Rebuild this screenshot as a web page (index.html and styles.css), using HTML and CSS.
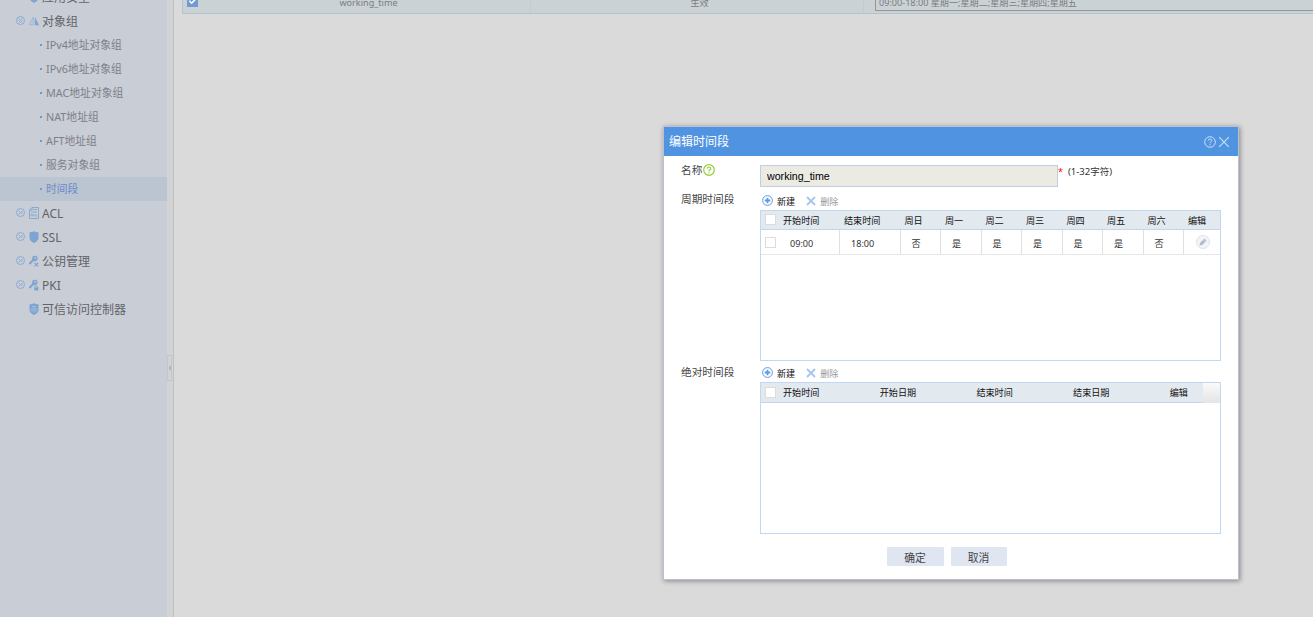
FILE: index.html
```
<!DOCTYPE html>
<html lang="zh-CN">
<head>
    <meta charset="utf-8">
    <link rel="stylesheet" href="styles.css">
    <title>编辑时间段</title>
</head>
<body>
    <svg class="sprite">
        <symbol id="i-more" viewBox="0 0 9 9"><circle cx="4.5" cy="4.5" r="4" /><path d="M2.7 2.8 4.3 4.5 2.7 6.2M4.8 2.8 6.4 4.5 4.8 6.2" /></symbol>
        <symbol id="i-shield" viewBox="0 0 10 12"><path d="M0.5 1.3Q3 1.5 5 .2 7 1.5 9.5 1.3V7Q9.3 10 5 12 .7 10 .5 7Z" /></symbol>
        <symbol id="i-key" viewBox="0 0 11 12"><path fill-rule="evenodd" d="M7 0a3.4 3.4 0 1 1-1.5 6.4L2 10.5H0V8.6L4 4.8A3.4 3.4 0 0 1 7 0ZM7.6 1.7a1 1 0 1 0 .1 0Z" /></symbol>
        <symbol id="i-add" viewBox="0 0 11 11"><circle cx="5.5" cy="5.5" r="4.9" /><path d="M5.5 2.7V8.3M2.7 5.5H8.3" stroke-width="1.8" /></symbol>
        <symbol id="i-del" viewBox="0 0 10 10"><path d="M1 1 9 9M9 1 1 9" /></symbol>
        <symbol id="i-help" viewBox="0 0 12 12"><circle cx="6" cy="6" r="5.3" /><path d="M4.2 4.6Q4.3 3 6 3T7.8 4.5Q7.8 5.3 6.8 5.9 6 6.3 6 7.3M6 8.2V9.4" /></symbol>
    </svg>

    <div class="page">
        <ul class="menu">
            <li class="menu-item"><span class="toggle"></span><svg class="icon fill"><use href="#i-shield" /></svg>应用安全</li>
            <li class="menu-item">
                <svg class="toggle" viewBox="0 0 9 9"><circle cx="4.5" cy="4.5" r="4" /><path d="M2.7 2.5 4.5 4 6.3 2.5M2.7 4.7 4.5 6.4 6.3 4.7" /></svg>
                <svg class="icon" viewBox="0 0 12 12"><path d="M5 1.5V10.5H.5Z" fill="none" stroke="#8fb2d8" /><path d="M7 1 12 11H7Z" fill="#7da4d2" /></svg>对象组
            </li>
            <li class="menu-sub">IPv4地址对象组</li>
            <li class="menu-sub">IPv6地址对象组</li>
            <li class="menu-sub">MAC地址对象组</li>
            <li class="menu-sub">NAT地址组</li>
            <li class="menu-sub">AFT地址组</li>
            <li class="menu-sub">服务对象组</li>
            <li class="menu-sub active">时间段</li>
            <li class="menu-item">
                <svg class="toggle"><use href="#i-more" /></svg>
                <svg class="icon" viewBox="0 0 10 12" fill="none" stroke="#85aad4"><path d="M3 .5H9.5V11.5H.5V3ZM.5 3H3V.5M4 2.5H8M2 5H8" /><path d="M2 9.3V7.4H3.4V9.3M5.6 7.4H4.7V9.1H5.6M6.8 7V9.1H8.4" stroke-width=".8" /></svg>ACL
            </li>
            <li class="menu-item"><svg class="toggle"><use href="#i-more" /></svg><svg class="icon fill"><use href="#i-shield" /></svg>SSL</li>
            <li class="menu-item">
                <svg class="toggle"><use href="#i-more" /></svg>
                <svg class="icon fill" viewBox="0 0 11 12"><use href="#i-key" width="10" height="11" /><path d="M6 8 10 12M10 8 6 12" stroke="#7da4d2" stroke-width="1.3" /></svg>公钥管理
            </li>
            <li class="menu-item">
                <svg class="toggle"><use href="#i-more" /></svg>
                <svg class="icon fill" viewBox="0 0 11 12"><use href="#i-key" width="10" height="11" /><path d="M6.3 9V8Q8 6 9.7 8V9" fill="none" stroke="#7da4d2" /><path d="M5.7 8.8H10.3V12H5.7Z" /></svg>PKI
            </li>
            <li class="menu-item"><span class="toggle"></span><svg class="icon fill" viewBox="0 0 10 12"><use href="#i-shield" /><path d="M3 3.5H7M3 5V8.5M5 3.5V9.5M7 5V8.5" stroke="#b2c5de" stroke-width=".8" /></svg>可信访问控制器</li>
        </ul>
        <div class="splitter"><span class="handle"></span></div>
        <div class="main">
            <div class="list-row">
                <div class="list-check"><svg viewBox="0 0 11 11"><path d="M2.3 4.8 4.7 7.2 8.8 2.8" /></svg></div>
                <div class="list-name">working_time</div>
                <div class="list-state">生效</div>
                <div class="list-time"><div class="time-box">09:00-18:00 星期一;星期二;星期三;星期四;星期五</div></div>
            </div>
        </div>
    </div>

    <div class="dialog">
        <div class="dialog-title">
            <span>编辑时间段</span>
            <svg class="title-help"><use href="#i-help" /></svg>
            <svg class="title-close"><use href="#i-del" /></svg>
        </div>
        <form class="form">
            <div class="field name-field">
                <label class="label">名称<svg class="label-help"><use href="#i-help" /></svg></label>
                <input class="input-text" type="text" value="working_time" disabled>
                <span class="required">*</span>
                <span class="hint">(1-32字符)</span>
            </div>

            <div class="field">
                <label class="label">周期时间段</label>
                <div class="grid-wrap">
                    <div class="toolbar">
                        <svg class="add"><use href="#i-add" /></svg><span>新建</span>
                        <svg class="del"><use href="#i-del" /></svg><span class="off">删除</span>
                    </div>
                    <div class="grid period">
                        <div class="row head">
                            <i class="check"></i><span>开始时间</span><span>结束时间</span><span>周日</span><span>周一</span><span>周二</span><span>周三</span><span>周四</span><span>周五</span><span>周六</span><span>编辑</span>
                        </div>
                        <div class="row data">
                            <i class="check"></i><span>09:00</span><span>18:00</span><span>否</span><span>是</span><span>是</span><span>是</span><span>是</span><span>是</span><span>否</span>
                            <svg class="edit" viewBox="0 0 14 14"><circle cx="7" cy="7" r="6.5" fill="#f3f4f9" stroke="#dfe2ec" /><path d="M3.5 10.5 4 8 8.5 3.6 10.6 5.7 6.1 10.1Z" fill="#b3b9ca" /><path d="M7.4 4.6 9.5 6.7" stroke="#e9ebf3" stroke-width=".7" /></svg>
                        </div>
                    </div>
                </div>
            </div>

            <div class="field">
                <label class="label second">绝对时间段</label>
                <div class="grid-wrap">
                    <div class="toolbar">
                        <svg class="add"><use href="#i-add" /></svg><span>新建</span>
                        <svg class="del"><use href="#i-del" /></svg><span class="off">删除</span>
                    </div>
                    <div class="grid absolute">
                        <div class="row head">
                            <i class="check"></i><span>开始时间</span><span>开始日期</span><span>结束时间</span><span>结束日期</span><span>编辑</span><b class="filler"></b>
                        </div>
                    </div>
                </div>
            </div>

            <div class="buttons">
                <button class="btn" type="button">确定</button>
                <button class="btn" type="button">取消</button>
            </div>
        </form>
    </div>
</body>
</html>
```
FILE: styles.css
```
* {
    box-sizing: border-box;
}

body {
    margin: 0;
    height: 617px;
    overflow: hidden;
    font-family: "Noto Sans", "Noto Sans CJK SC", sans-serif;
    font-size: 9.1px;
    color: #333;
    background: #dadada;
}

svg {
    flex: none;
}

.sprite {
    display: none;
}

.page {
    display: flex;
    height: 617px;
}

/* left menu */
.menu {
    width: 167px;
    margin: 0;
    padding: 0;
    list-style: none;
    background: #c9cdd6;
}

.menu-item {
    display: flex;
    align-items: center;
    height: 24px;
    padding-left: 16px;
    font-size: 12px;
    color: #626469;
}

.menu-item:first-child {
    margin-top: -15px;
}

.toggle {
    width: 9px;
    height: 9px;
    margin: 0 4px 2px 0;
    fill: none;
    stroke: #85a6cf;
    stroke-width: 0.9;
}

.icon {
    width: 10px;
    height: 12px;
    margin-right: 3px;
}

.fill {
    fill: #7da4d2;
}

.menu-sub {
    display: flex;
    align-items: center;
    height: 24px;
    padding: 0 0 2px 40px;
    font-size: 10.8px;
    color: #7d8087;
}

.menu-sub::before {
    content: "";
    width: 2px;
    height: 2px;
    margin: 2px 4px 0 0;
    background: #7299c4;
}

.active {
    background: #bac5d1;
    color: #6f89cb;
}

.splitter {
    display: flex;
    align-items: center;
    width: 7px;
    padding-top: 119px;
    background: #d2d3d5;
    border-right: 1px solid #bfc0c2;
}

.handle {
    width: 5px;
    height: 26px;
    border: 1px solid #c4c5c8;
    background: linear-gradient(#b4b5b8, #b4b5b8) center / 2px 4px no-repeat;
}

/* list behind the dialog */
.main {
    flex: 1;
    padding-left: 8px;
}

.list-row {
    display: grid;
    grid-template-columns: 19px 329px 333px 1fr;
    height: 14px;
    background: #cad2d5;
    border: solid #b3c4ce;
    border-width: 0 0 1px 1px;
    line-height: 5px;
    text-align: center;
    color: #7b7d7e;
}

.list-check svg {
    display: block;
    width: 11px;
    height: 11px;
    margin: -4px 0 0 4px;
    background: #6f9bd2;
    fill: none;
    stroke: #fff;
    stroke-width: 1.6;
}

.list-name,
.list-state {
    padding-left: 5px;
    border-right: 1px solid #c4cccf;
}

.list-time {
    padding-left: 11px;
    text-align: left;
}

.time-box {
    height: 11px;
    padding-left: 3px;
    border: solid #929697;
    border-width: 0 0 1px 1px;
    white-space: nowrap;
}

/* dialog */
.dialog {
    position: absolute;
    left: 663px;
    top: 126px;
    width: 576px;
    height: 454px;
    background: #fff;
    border: 1px solid #b9c2d0;
    box-shadow: 1px 1px 5px rgba(0, 0, 0, 0.4);
}

.dialog-title {
    display: flex;
    align-items: center;
    height: 29px;
    padding: 0 8px 2px 5px;
    background: #5093e1;
    color: #fff;
    font-size: 12px;
}

.title-help,
.title-close {
    fill: none;
    stroke: #c6dcf6;
    stroke-width: 1;
}

.title-help {
    width: 12px;
    height: 12px;
    margin: 3px 2px 0 auto;
}

.title-close {
    width: 12px;
    height: 12px;
    margin-top: 3px;
}

.form {
    padding: 9px 17px 0;
}

.field {
    display: flex;
    align-items: flex-start;
}

.label {
    display: flex;
    width: 79px;
    font-size: 10.67px;
    line-height: 16px;
    color: #444;
    margin-top: -2px;
}

.second {
    margin-top: -1px;
}

.label-help {
    width: 12px;
    height: 12px;
    margin: 2px 0 0 1px;
    fill: none;
    stroke: #94ce38;
    stroke-width: 1.2;
}

.name-field {
    height: 28px;
}

.name-field .label {
    margin-top: -3px;
}

.input-text {
    width: 298px;
    height: 22px;
    padding: 0 6px;
    border: 1px solid #c1cde3;
    background: #ebebe4;
    color: #000;
    font: 10.67px "Liberation Sans", Arial, sans-serif;
}

.required {
    color: #f00;
    font-size: 9px;
    line-height: 13px;
}

.hint {
    margin-left: 5px;
    font-size: 9.5px;
    line-height: 14px;
}

.grid-wrap {
    width: 461px;
}

.toolbar {
    display: flex;
    align-items: center;
    height: 17px;
    padding: 0 0 2px 2px;
    color: #111;
}

.add,
.del {
    fill: none;
    stroke: #5d9ae2;
}

.add {
    width: 11px;
    height: 11px;
    margin-right: 4px;
}

.del {
    width: 10px;
    height: 10px;
    margin: 0 4px 0 11px;
    stroke: #a5c5ee;
    stroke-width: 1.8;
}

.off {
    color: #999;
}

.grid {
    border: 1px solid #c1d8f2;
}

.period {
    height: 151px;
    margin-bottom: 4px;
}

.absolute {
    height: 152px;
}

.row {
    display: grid;
}

.period .row {
    grid-template-columns: 18px 61px 60.5px repeat(7, 40.5px) 1fr;
}

.absolute .row {
    grid-template-columns: 18px repeat(4, 96.7px) 37px 1fr;
}

.head {
    height: 19px;
    background: #e2e9ef;
    border-bottom: 1px solid #c9d3ea;
    line-height: 20px;
    color: #111;
}

.absolute .head {
    height: 20px;
}

.head span {
    padding-left: 4px;
}

.data {
    height: 25px;
    border-bottom: 1px solid #e6e6e6;
    line-height: 28px;
}

.data span {
    height: 24px;
    padding-left: 11px;
    border-right: 1px solid #e0e0e0;
}

.check {
    width: 11px;
    height: 11px;
    margin: 3px 0 0 4px;
    background: #fff;
    border: 1px solid #dcdcdc;
}

.absolute .check {
    margin-top: 4px;
}

.data .check {
    margin-top: 7px;
}

.edit {
    width: 14px;
    height: 14px;
    margin: 5px 0 0 12px;
}

.filler {
    background: linear-gradient(#fafafa, #e4e4e6);
}

.buttons {
    display: flex;
    justify-content: center;
    gap: 7px;
    padding: 13px 9px 0 0;
}

.btn {
    width: 57px;
    height: 19px;
    padding: 2px 0 0;
    border: 0;
    border-radius: 1px;
    background: #dfe6f2;
    color: #444;
    font-family: inherit;
    font-size: 10.8px;
    line-height: 17px;
}

.btn + .btn {
    width: 56px;
}
```
